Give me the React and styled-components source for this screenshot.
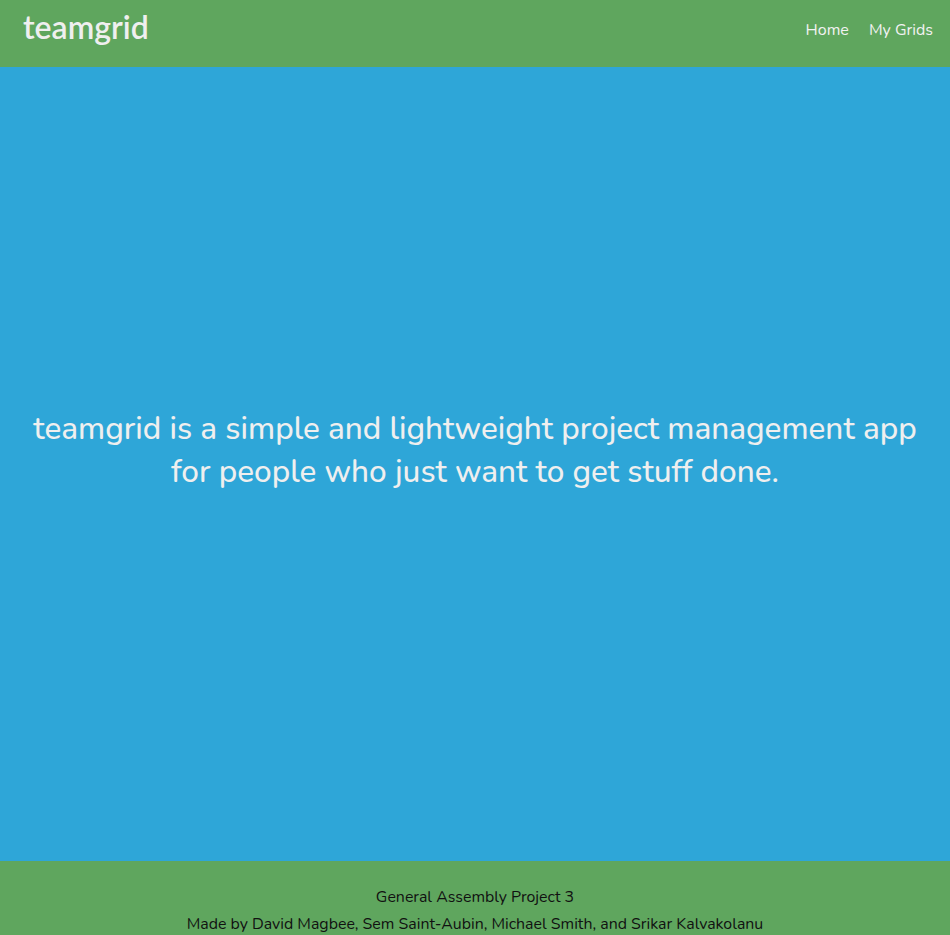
import React from "react";
import styled, { createGlobalStyle } from "styled-components";

const GlobalStyle = createGlobalStyle`
    body {
        margin: 0;
        font-family: "Nunito", Lato, "Open Sans", sans-serif;
        background-color: #5fa65e;
    }
`;

const Header = styled.header`
    height: 67px;
    background-color: #5fa65e;
    display: flex;
    align-items: center;
    justify-content: space-between;
    padding: 0 17px 0 23px;
    box-sizing: border-box;
`;

const Logo = styled.div`
    color: #efefef;
    font-family: Lato, sans-serif;
    font-size: 32px;
    font-weight: 600;
    margin-top: -14px;
`;

const Nav = styled.nav`
    display: flex;
    gap: 20px;
    margin-top: -8px;
`;

const NavLink = styled.a`
    color: #f2f2f2;
    font-size: 16px;
    text-decoration: none;
`;

const Hero = styled.main`
    height: 794px;
    background-color: #2ea6d8;
    display: flex;
    align-items: center;
    justify-content: center;
    padding-bottom: 28px;
    box-sizing: border-box;
`;

const Tagline = styled.h2`
    margin: 0;
    color: #efefef;
    font-size: 31.5px;
    font-weight: 500;
    line-height: 43px;
    text-align: center;
`;

const Footer = styled.footer`
    background-color: #5fa65e;
    padding: 23px 0 20px;
    text-align: center;
    color: #111;
    font-size: 15.9px;
    line-height: 27px;
`;

export default function App() {
    return (
        <>
            <GlobalStyle />
            <Header>
                <Logo>teamgrid</Logo>
                <Nav>
                    <NavLink href="#">Home</NavLink>
                    <NavLink href="#">My Grids</NavLink>
                </Nav>
            </Header>
            <Hero>
                <Tagline>
                    teamgrid is a simple and lightweight project management app
                    <br />
                    for people who just want to get stuff done.
                </Tagline>
            </Hero>
            <Footer>
                <div>General Assembly Project 3</div>
                <div>
                    Made by David Magbee, Sem Saint-Aubin, Michael Smith, and
                    Srikar Kalvakolanu
                </div>
            </Footer>
        </>
    );
}
